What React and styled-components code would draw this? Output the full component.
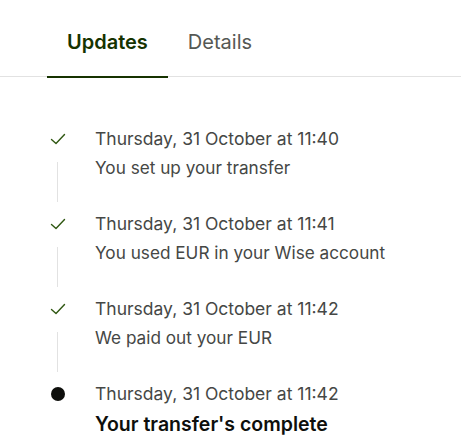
import React, { useState } from "react"
import styled, { createGlobalStyle } from "styled-components"

const GlobalStyle = createGlobalStyle`
  body {
    margin: 0;
    background: #ffffff;
    font-family: Inter, "Liberation Sans", sans-serif;
  }
`

const updates = [
  { date: "Thursday, 31 October at 11:40", text: "You set up your transfer", done: true },
  { date: "Thursday, 31 October at 11:41", text: "You used EUR in your Wise account", done: true },
  { date: "Thursday, 31 October at 11:42", text: "We paid out your EUR", done: true },
  { date: "Thursday, 31 October at 11:42", text: "Your transfer's complete", done: false },
]

const CheckIcon = () => (
  <svg width="18" height="18" viewBox="0 0 18 18" fill="none">
    <path d="M2.5 9.5 L7 13.5 L15.5 4.5" stroke="#2f5711" strokeWidth="1.4" strokeLinecap="round" strokeLinejoin="round" />
  </svg>
)

const App = () => {
  const [tab, setTab] = useState("updates")

  return (
    <Page>
      <GlobalStyle />
      <TabBar>
        <Tab $active={tab === "updates"} onClick={() => setTab("updates")}>Updates</Tab>
        <Tab $active={tab === "details"} onClick={() => setTab("details")}>Details</Tab>
      </TabBar>
      <Timeline>
        {updates.map((item, index) => {
          const last = index === updates.length - 1
          return (
            <Step key={index}>
              <Marker>
                <IconBox>{item.done ? <CheckIcon /> : <Dot />}</IconBox>
                {!last && <Line />}
              </Marker>
              <Content>
                <DateText>{item.date}</DateText>
                <Title $final={last}>{item.text}</Title>
              </Content>
            </Step>
          )
        })}
      </Timeline>
    </Page>
  )
}

export default App

const Page = styled.div`
  width: 461px;
  height: 444px;
  overflow: hidden;
`

const TabBar = styled.div`
  display: flex;
  padding: 0 0 0 47px;
  height: 76px;
  border-bottom: 1px solid #e2e2e2;
`

const Tab = styled.button`
  background: none;
  border: none;
  font-family: Inter, "Liberation Sans", sans-serif;
  font-size: 20px;
  font-weight: ${(p) => (p.$active ? 600 : 400)};
  color: ${(p) => (p.$active ? "#163300" : "#555854")};
  padding: 8px 20px 0;
  height: 78px;
  border-bottom: 2px solid ${(p) => (p.$active ? "#163300" : "transparent")};
  cursor: pointer;
`

const Timeline = styled.div`
  display: flex;
  flex-direction: column;
  padding: 50px 0 0 47px;
`

const Step = styled.div`
  display: flex;
  height: 85px;
`

const Marker = styled.div`
  width: 48px;
  display: flex;
  flex-direction: column;
  align-items: flex-start;
`

const IconBox = styled.div`
  width: 22px;
  height: 24px;
  display: flex;
  align-items: center;
  justify-content: center;
`

const Line = styled.div`
  width: 1px;
  height: 40px;
  margin: 11px 0 0 10px;
  background: #e2e2e2;
`

const Dot = styled.div`
  width: 14px;
  height: 14px;
  border-radius: 50%;
  background: #0e0f0c;
`

const Content = styled.div`
  display: flex;
  flex-direction: column;
`

const DateText = styled.div`
  font-size: 17.5px;
  line-height: 24px;
  color: #454745;
`

const Title = styled.div`
  margin-top: 5px;
  font-size: ${(p) => (p.$final ? "19.5px" : "17.2px")};
  font-weight: ${(p) => (p.$final ? 600 : 400)};
  line-height: 24px;
  color: ${(p) => (p.$final ? "#0e0f0c" : "#454745")};
  ${(p) => p.$final && "margin-top: 6px;"}
`
